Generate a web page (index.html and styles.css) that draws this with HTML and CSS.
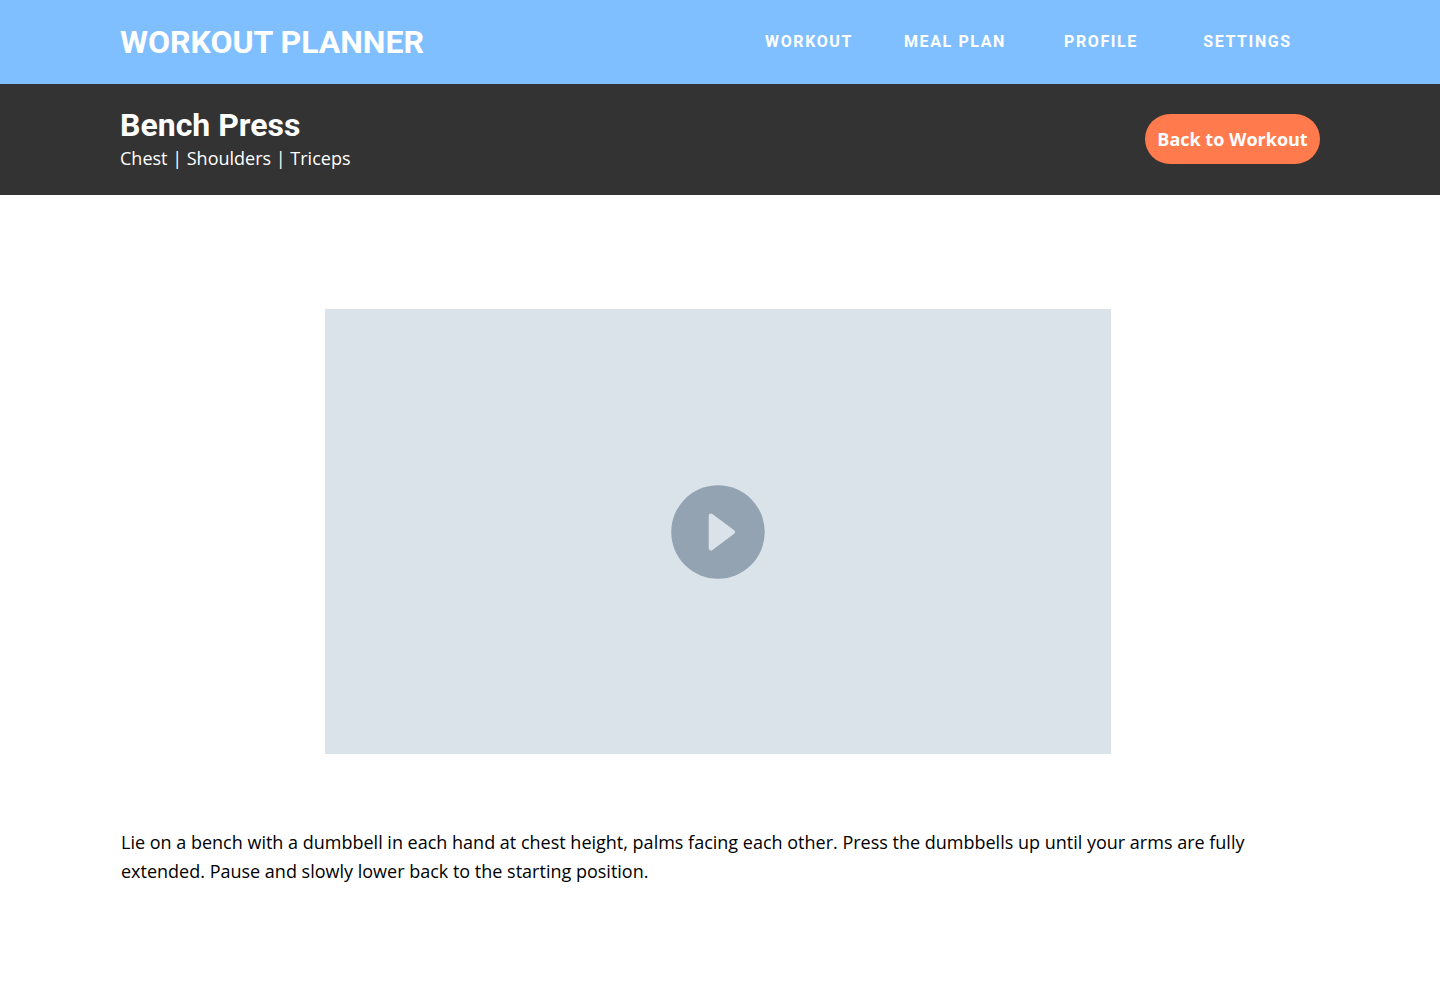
FILE: index.html
```html
<!DOCTYPE html>
<html lang="en">
<head>
<meta charset="utf-8">
<title>Workout Planner</title>
<link rel="stylesheet" href="styles.css">
</head>
<body>
<header class="topbar">
  <div class="brand">WORKOUT PLANNER</div>
  <nav class="nav">
    <a>WORKOUT</a><a>MEAL PLAN</a><a>PROFILE</a><a>SETTINGS</a>
  </nav>
</header>
<section class="subheader">
  <div class="exercise">
    <h1>Bench Press</h1>
    <p>Chest | Shoulders | Triceps</p>
  </div>
  <button class="back">Back to Workout</button>
</section>
<main>
  <div class="video">
    <svg class="play" width="94" height="94" viewBox="0 0 94 94">
      <circle cx="47" cy="47" r="46.75" fill="#94a3b1"/>
      <path d="M40 30.8 L61.8 47 L40 63.2 Z" fill="#dae2ea" stroke="#dae2ea" stroke-width="4.6" stroke-linejoin="round"/>
    </svg>
  </div>
  <p class="description">Lie on a bench with a dumbbell in each hand at chest height, palms facing each other. Press the dumbbells up until your arms are fully extended. Pause and slowly lower back to the starting position.</p>
</main>
</body>
</html>
```

FILE: styles.css
```css
* { box-sizing: border-box; }
body { margin: 0; background: #fff; font-family: "Open Sans", sans-serif; font-size: 18px; color: #000; }
.topbar { height: 84px; padding: 0 120px; display: flex; align-items: center; justify-content: space-between; background: #80bfff; color: #fff; font-family: Roboto, sans-serif; }
.brand { font-size: 32px; font-weight: 700; line-height: 38px; white-space: nowrap; }
.nav { display: grid; grid-template-columns: 146px 146px 146px 147px; margin-right: -1px; text-align: center; font-size: 16px; line-height: 20px; font-weight: 700; letter-spacing: 1.6px; }
.subheader { height: 111px; padding: 22px 120px 0; display: flex; align-items: flex-start; justify-content: space-between; background: #333; color: #fff; }
.exercise h1 { margin: 0; font: 700 32px/38px Roboto, sans-serif; }
.exercise p { margin: 2px 0 0; line-height: 25px; }
.back { width: 175px; height: 50px; margin-top: 8px; padding: 1px 0 0; border: 0; border-radius: 25px; background: #ff7a4d; color: #fff; font: 700 18px/25px "Open Sans", sans-serif; white-space: nowrap; }
.video { width: 786px; height: 445px; margin: 114px 0 0 325px; display: flex; align-items: center; justify-content: center; background: #dae2ea; }
.description { width: 1160px; margin: 74px 0 0 121px; line-height: 29px; }
```
